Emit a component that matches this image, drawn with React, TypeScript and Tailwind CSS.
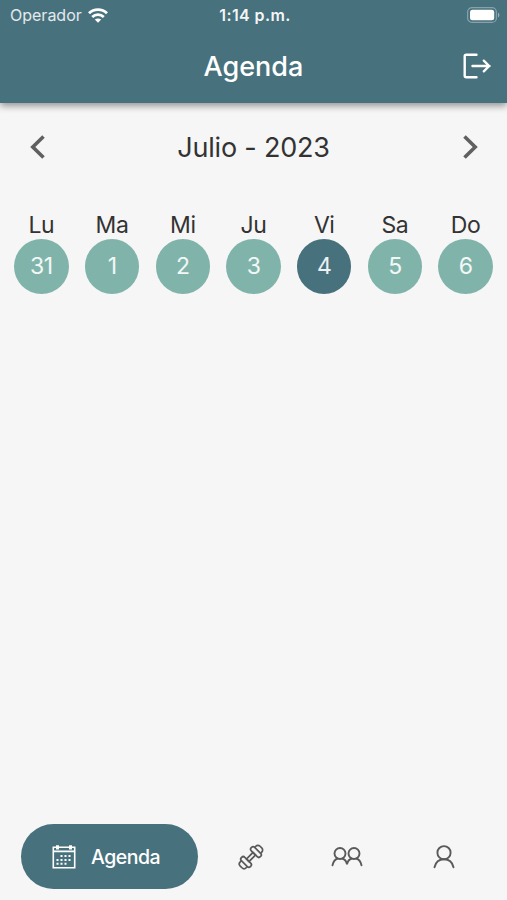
const days = [
  { label: "Lu", day: 31 },
  { label: "Ma", day: 1 },
  { label: "Mi", day: 2 },
  { label: "Ju", day: 3 },
  { label: "Vi", day: 4, selected: true },
  { label: "Sa", day: 5 },
  { label: "Do", day: 6 },
];

function WifiIcon() {
  return (
    <svg className="h-[15px] w-5" viewBox="0 0 20 15" fill="none" stroke="white" strokeWidth="2.8" aria-hidden="true">
      <path d="M1 5.300C6 .4 14 .4 19 5.300" />
      <path d="M4.200 8.900c3.300-3.100 8.300-3.100 11.600 0" />
      <path d="M6.800 11.600c1.800-1.600 4.600-1.600 6.400 0L10 14.800z" fill="white" stroke="none" />
    </svg>
  );
}

function BatteryIcon() {
  return (
    <svg className="h-4 w-[33px]" viewBox="0 0 33 16" fill="none" aria-hidden="true">
      <rect x=".6" y=".6" width="28.800" height="14.800" rx="4.500" stroke="white" strokeOpacity=".35" strokeWidth="1.200" />
      <rect x="3" y="2.800" width="24.200" height="10.400" rx="2.500" fill="white" />
      <path d="M31 5.500c1.800.8 1.800 4.200 0 5z" fill="white" fillOpacity=".45" />
    </svg>
  );
}

function LogoutIcon() {
  return (
    <svg className="h-[26px] w-7" viewBox="0 0 28 26" fill="none" stroke="white" strokeWidth="2.400" strokeLinecap="round" strokeLinejoin="round" aria-hidden="true">
      <path d="M13.500 1.700H3.200a1.500 1.500 0 0 0-1.500 1.500v19.600a1.500 1.500 0 0 0 1.500 1.500h10.300" />
      <path d="M9.500 13h17M20.800 7.700l5.400 5.300-5.400 5.300" />
    </svg>
  );
}

function CalendarIcon() {
  return (
    <svg className="h-6 w-6" viewBox="0 0 24 24" fill="none" stroke="white" strokeWidth="1.600" aria-hidden="true">
      <path d="M1.300 2.200h21.400v20.500H1.300zM1.300 6.400h21.400" />
      <path d="M5.500.2v4.200M18.500.2v4.200" strokeWidth="3" />
      <path d="M8.500 11H20M4.500 14.900H20M4.500 18.800H16" strokeWidth="2" strokeDasharray="2 2" />
    </svg>
  );
}

function DumbbellIcon() {
  return (
    <svg className="size-7" viewBox="0 0 28 28" fill="none" stroke="#5a5a5a" strokeWidth="1.700" strokeLinejoin="round" aria-hidden="true">
      <g transform="rotate(-45 14 14)">
        <path d="M9.400 12.200h9.200v3.600H9.400z" />
        <rect x="4.600" y="7.600" width="4.800" height="12.800" rx="2.200" />
        <path d="M4.600 9.800H3a3 3 0 0 0-3 3v2.400a3 3 0 0 0 3 3h1.600" />
        <rect x="18.600" y="7.600" width="4.800" height="12.800" rx="2.200" />
        <path d="M23.400 9.800H25a3 3 0 0 1 3 3v2.400a3 3 0 0 1-3 3h-1.600" />
      </g>
    </svg>
  );
}

function GroupIcon() {
  return (
    <svg className="h-5 w-8" viewBox="0 0 32 20" fill="none" stroke="#5a5a5a" strokeWidth="1.900" strokeLinecap="round" aria-hidden="true">
      <circle cx="9" cy="6.500" r="5.500" />
      <circle cx="23" cy="6.500" r="5.500" />
      <path d="M1.500 18.300c.8-3.600 2.600-6 5.200-6.800M11.300 11.500c2.600.9 4.100 2.800 4.700 5.800.6-3 2.100-4.900 4.700-5.800M25.300 11.500c2.600.8 4.400 3.200 5.200 6.800" />
    </svg>
  );
}

function UserIcon() {
  return (
    <svg className="h-6 w-[22px]" viewBox="0 0 22 24" fill="none" stroke="#5a5a5a" strokeWidth="1.900" strokeLinecap="round" aria-hidden="true">
      <circle cx="11" cy="7.700" r="6.600" />
      <path d="M1.500 22.300c1.200-5.300 4.500-8 9.500-8s8.300 2.700 9.500 8" />
    </svg>
  );
}

export default function App() {
  return (
    <div className="flex h-[900px] w-[507px] flex-col overflow-hidden bg-[#f6f6f6] font-['Inter','Liberation_Sans',sans-serif]">
      <header className="h-[103px] shrink-0 bg-[#48717e] text-white shadow-[0_3px_7px_rgba(0,0,0,0.4)]">
        <div className="grid h-[30px] grid-cols-3 items-center pr-[7px] pl-[10px]">
          <div className="flex items-center gap-[6px] text-base leading-none text-white/85">
            <span>Operador</span>
            <WifiIcon />
          </div>
          <span className="text-center text-base leading-none font-semibold tracking-[0.4px] text-white/95">
            1:14 p.m.
          </span>
          <div className="flex justify-end">
            <BatteryIcon />
          </div>
        </div>
        <div className="grid h-[72px] grid-cols-[1fr_auto_1fr] items-center pr-4 pl-4">
          <span />
          <h1 className="text-[27px] leading-none font-medium">Agenda</h1>
          <button className="justify-self-end" aria-label="Salir">
            <LogoutIcon />
          </button>
        </div>
      </header>

      <main className="grow">
        <div className="flex h-[88px] items-center justify-between px-[29px] text-[#606060]">
          <button aria-label="Anterior">
            <svg className="h-6 w-4" viewBox="0 0 16 24" fill="none" stroke="currentColor" strokeWidth="3.600" aria-hidden="true">
              <path d="M14.500 1.500 3.800 12l10.700 10.500" />
            </svg>
          </button>
          <h2 className="text-[27px] leading-none tracking-[-0.2px] text-[#333]">Julio - 2023</h2>
          <button aria-label="Siguiente">
            <svg className="h-6 w-4" viewBox="0 0 16 24" fill="none" stroke="currentColor" strokeWidth="3.600" aria-hidden="true">
              <path d="m2.500 1.500 10.700 10.500L2.500 22.500" />
            </svg>
          </button>
        </div>

        <div className="grid grid-cols-7 px-[6px] pt-5">
          {days.map(({ label, day, selected }) => (
            <div key={label} className="flex flex-col items-center">
              <span className="h-7 text-[23px] leading-7 tracking-[-0.4px] text-[#333]">{label}</span>
              <button
                className={`flex size-[54.500px] items-center justify-center rounded-full text-[23px] leading-none tracking-[-0.5px] text-white/90 ${
                  selected ? "bg-[#48717e]" : "bg-[#80b4aa]"
                }`}
              >
                {day}
              </button>
            </div>
          ))}
        </div>
      </main>

      <nav className="flex h-[76px] shrink-0 items-start pl-[21px]">
        <button className="flex h-[65px] w-[177px] items-center gap-[15px] rounded-full bg-[#48717e] pl-[31px] text-white">
          <CalendarIcon />
          <span className="pt-[3px] text-[19.500px] leading-none font-medium tracking-[-0.5px]">Agenda</span>
        </button>
        <div className="grid h-[65px] grow grid-cols-3 items-center pr-[15px] pl-[5px]">
          <button className="flex justify-center" aria-label="Entrenamiento">
            <DumbbellIcon />
          </button>
          <button className="flex justify-center" aria-label="Grupos">
            <GroupIcon />
          </button>
          <button className="flex justify-center" aria-label="Perfil">
            <UserIcon />
          </button>
        </div>
      </nav>
    </div>
  );
}
